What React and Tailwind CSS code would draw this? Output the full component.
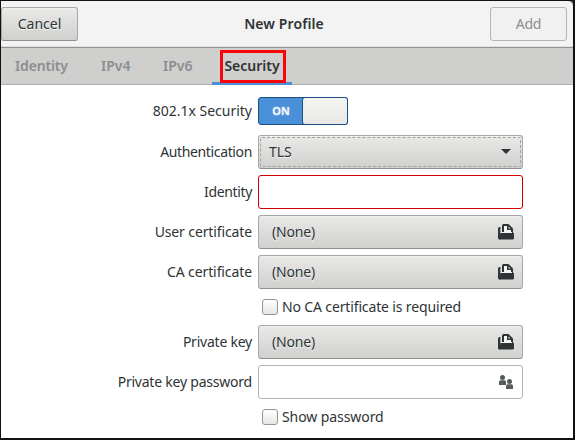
import React from "react";

function FolderIcon() {
  return (
    <svg width="16" height="16" viewBox="0 0 16 16" className="mr-2 shrink-0">
      <path d="M0 4.5L1 3H2.5V15.5H1L0 14.5Z" fill="#2e3436" />
      <path d="M2.5 4V10" stroke="#a8aaaa" strokeWidth="1" />
      <path d="M4 9V1.5L5 0H10.5L15 4.5V9Z" fill="#2e3436" />
      <path d="M6 2H9V6H13V8H6Z" fill="#f4f4f2" />
      <path d="M10.5 2.5V4.5H12.5Z" fill="#f4f4f2" />
      <path d="M3 8.5H14" stroke="#f4f4f2" strokeWidth="1" />
      <path d="M2.5 9H16V14.5L15 15.5H1.5Z" fill="#2e3436" />
    </svg>
  );
}

function PeopleIcon() {
  return (
    <svg width="16" height="16" viewBox="0 0 16 16" className="mr-2 shrink-0" fill="#555b5b">
      <circle cx="4.5" cy="3.5" r="2.5" />
      <path d="M1 11V8Q1 6.3 2.5 6.3H6.5Q8 6.3 8 8V11Z" />
      <circle cx="11.5" cy="7.5" r="2.5" />
      <path d="M8 15V12Q8 10.3 9.5 10.3H13.5Q15 10.3 15 12V15Z" />
    </svg>
  );
}

function Row({ label, spacing = "", children }) {
  return (
    <div className="flex h-[34px] items-center">
      <div className="flex w-[251px] shrink-0 justify-end">
        <span className={spacing}>{label}</span>
      </div>
      <div className="ml-[6px] flex">{children}</div>
    </div>
  );
}

const raised =
  "border border-[#a8a8a6] border-b-[#8f908c] bg-linear-to-b from-[#e9e9e7] to-[#d0d0ce] [text-shadow:0_1px_#f4f4f4] shadow-[inset_0_1px_#efefed]";

function FileButton() {
  return (
    <button className={`flex h-[34px] w-[265px] items-center justify-between rounded-[3px] pl-[13px] ${raised}`}>
      <span className="tracking-[-0.17px]">(None)</span>
      <FolderIcon />
    </button>
  );
}

function Check({ label, spacing = "" }) {
  return (
    <div className="ml-[261px] flex h-6 items-center">
      <span className="size-4 rounded-[3px] border border-[#94958f] bg-linear-to-b from-white to-[#e6e6e4]" />
      <span className={`ml-1 ${spacing}`}>{label}</span>
    </div>
  );
}

export default function App() {
  return (
    <div className="flex h-[440px] w-[575px] flex-col overflow-hidden border border-r-2 border-b-2 border-[#111] bg-white font-['Noto_Sans','Open_Sans',sans-serif] text-[14px] leading-5 whitespace-nowrap text-[#2e3436]">
      <div className="flex h-[47px] shrink-0 bg-[#55585a]">
        <header className="flex flex-1 items-start justify-between rounded-tr-[5px] border-b border-[#92938f] bg-[#f3f3f3] pt-[6px] pr-[6px] shadow-[inset_0_-1px_#e1e1dc]">
          <button className={`h-[34px] w-[77px] rounded-[3px] ${raised}`}>
            <span>Cancel</span>
          </button>
          <h1 className="mt-[7px] font-semibold tracking-[0.1px]">New Profile</h1>
          <button className="h-[34px] w-[77px] rounded-[3px] border border-[#b4b5b2] bg-[#f1f1f1] text-[#8b8e8f]">
            <span className="tracking-[-0.2px]">Add</span>
          </button>
        </header>
      </div>
      <nav className="flex h-[37px] shrink-0 border-b border-[#b0b0ae] bg-[#cfcfcd] font-semibold text-[#8b8e8f]">
        <div className="flex w-[86px] items-center pl-[14px]"><span className="tracking-[-0.15px]">Identity</span></div>
        <div className="flex w-[62px] items-center pl-[14px]"><span>IPv4</span></div>
        <div className="flex w-[63px] items-center pl-[14px]"><span>IPv6</span></div>
        <div className="relative z-10 flex h-[37px] w-[80px] items-center justify-center border-b-[3px] border-[#4a90d9] pt-[2px] text-[#2e3436]">
          <span>Security</span>
          <div className="absolute top-[2px] left-[8px] h-[33px] w-[66px] border-[3px] border-[#fb0309]" />
        </div>
      </nav>
      <main className="flex flex-col pt-[9px]">
        <Row label="802.1x Security">
          <div className="flex h-7 w-[90px] rounded-[3px] border border-[#1c5187] bg-[#4a90d9]">
            <span className="flex w-[43px] items-center justify-center pl-[1px] text-[11px] font-semibold text-white [text-shadow:0_0_2px_#ffffff99]">ON</span>
            <span className="-my-px -mr-px flex-1 rounded-[3px] border border-[#1c5187] bg-linear-to-b from-[#f5f5f4] to-[#e8e8e6]" />
          </div>
        </Row>
        <div className="mt-[7px] flex flex-col gap-[6px]">
          <Row label="Authentication" spacing="tracking-[-0.36px]">
            <button className={`flex h-[34px] w-[265px] rounded-[3px] p-px ${raised}`}>
              <span className="flex h-full flex-1 items-center justify-between rounded-[2px] border border-dashed border-[#a2a3a0] pr-[7px] pl-[8px]">
                <span>TLS</span>
                <svg width="14" height="6" viewBox="0 0 14 6"><path d="M2 0H12L7 5Z" fill="#2e3436" /></svg>
              </span>
            </button>
          </Row>
          <Row label="Identity" spacing="tracking-[-0.36px]"><div className="h-[34px] w-[265px] rounded-[3px] border border-[#cc0000]" /></Row>
          <Row label="User certificate" spacing="tracking-[-0.12px]"><FileButton /></Row>
          <Row label="CA certificate" spacing="tracking-[-0.1px]"><FileButton /></Row>
          <Check label="No CA certificate is required" spacing="tracking-[-0.14px]" />
          <Row label="Private key" spacing="tracking-[-0.23px]"><FileButton /></Row>
          <Row label="Private key password" spacing="tracking-[-0.22px]">
            <div className="flex h-[34px] w-[265px] items-center justify-end rounded-[3px] border border-[#b4b5b2]"><PeopleIcon /></div>
          </Row>
          <Check label="Show password" spacing="tracking-[-0.08px]" />
        </div>
      </main>
    </div>
  );
}
